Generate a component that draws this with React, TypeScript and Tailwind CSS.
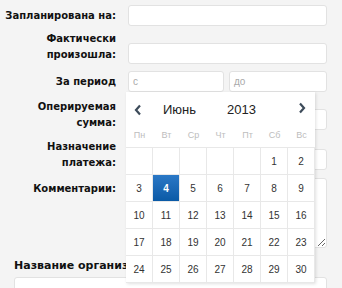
import React from "react"

const inputCls = "h-[21px] rounded-[3px] border border-[#e2e2e2] bg-white"

function Label({ children, className = "" }: { children: React.ReactNode; className?: string }) {
  return (
    <div className={"w-[116px] shrink-0 whitespace-nowrap text-right text-[10px] font-bold leading-[16px] text-[#111] " + className}>
      {children}
    </div>
  )
}

const weeks: (number | null)[][] = [
  [null, null, null, null, null, 1, 2],
  [3, 4, 5, 6, 7, 8, 9],
  [10, 11, 12, 13, 14, 15, 16],
  [17, 18, 19, 20, 21, 22, 23],
  [24, 25, 26, 27, 28, 29, 30],
]

function Calendar() {
  return (
    <div className="absolute left-[126px] top-[92px] w-[189px] bg-white shadow-[1px_1px_3px_rgba(0,0,0,0.12)] font-['Liberation_Sans',Arial,sans-serif]">
      <div className="flex h-[33px] items-center px-[8px] pt-[2px]">
        <svg width="8" height="12" viewBox="0 0 8 12" className="mr-[21px]">
          <path d="M6 1.5 L2 6 L6 10.5" fill="none" stroke="#3d4b5a" strokeWidth="2.2" />
        </svg>
        <span className="text-[13px] text-[#222]">Июнь</span>
        <span className="ml-[31px] text-[13px] text-[#222]">2013</span>
        <svg width="8" height="12" viewBox="0 0 8 12" className="ml-auto mr-[1px] -mt-[3px]">
          <path d="M2 1.5 L6 6 L2 10.5" fill="none" stroke="#3d4b5a" strokeWidth="2.2" />
        </svg>
      </div>
      <div className="grid h-[22px] grid-cols-7 items-center text-center text-[9px] text-[#bdbdbd]">
        {["Пн", "Вт", "Ср", "Чт", "Пт", "Сб", "Вс"].map((d) => (
          <div key={d}>{d}</div>
        ))}
      </div>
      <div className="grid grid-cols-7 border-t border-[#e8e8e8]">
        {weeks.flat().map((d, i) => (
          <div
            key={i}
            className={
              "flex h-[27px] items-center justify-center border-r border-b border-[#e8e8e8] text-[10px] " +
              (d === 4
                ? "bg-gradient-to-b from-[#2a78c6] to-[#0a5aa6] font-bold text-white"
                : "text-[#333]")
            }
          >
            {d}
          </div>
        ))}
      </div>
    </div>
  )
}

export default function App() {
  return (
    <div className="relative h-[288px] w-[342px] overflow-hidden bg-[#f4f4f4] font-['DejaVu_Sans',Verdana,sans-serif]">
      <div className="flex items-center gap-[12px] pt-[5px]">
        <Label>Запланирована на:</Label>
        <div className={inputCls + " w-[199px]"} />
      </div>
      <div className="mt-[5px] flex items-start gap-[12px]">
        <Label>
          Фактически
          <br />
          произошла:
        </Label>
        <div className={inputCls + " mt-[12px] w-[199px]"} />
      </div>
      <div className="mt-[7px] flex items-center gap-[12px]">
        <Label>За период</Label>
        <div className="flex gap-[5px]">
          <div className={inputCls + " w-[96px] px-[4px] text-[10px] leading-[19px] text-[#aaa] font-['Liberation_Sans',Arial,sans-serif]"}>с</div>
          <div className={inputCls + " w-[98px] px-[4px] text-[10px] leading-[19px] text-[#aaa] font-['Liberation_Sans',Arial,sans-serif]"}>до</div>
        </div>
      </div>
      <div className="mt-[7px] flex items-start gap-[12px]">
        <Label className="leading-[15px]">
          Оперируемая
          <br />
          сумма:
        </Label>
        <div className={inputCls + " mt-[10px] w-[199px]"} />
      </div>
      <div className="mt-[8px] flex items-start gap-[12px]">
        <Label className="leading-[15px]">
          Назначение
          <br />
          платежа:
        </Label>
        <div className={inputCls + " mt-[10px] w-[199px]"} />
      </div>
      <div className="mt-[7px] flex items-start gap-[12px]">
        <Label className="mt-[3px]">Комментарии:</Label>
        <textarea className="h-[70px] w-[199px] resize rounded-[3px] border border-[#e2e2e2] bg-white" />
      </div>
      <div className="ml-[14px] mt-[10px] w-[112px] overflow-hidden whitespace-nowrap text-[11px] font-bold leading-[16px] text-[#111]">
        Название организации
      </div>
      <div className={inputCls + " ml-[14px] mt-[3px] w-[313px]"} />
      <Calendar />
    </div>
  )
}
